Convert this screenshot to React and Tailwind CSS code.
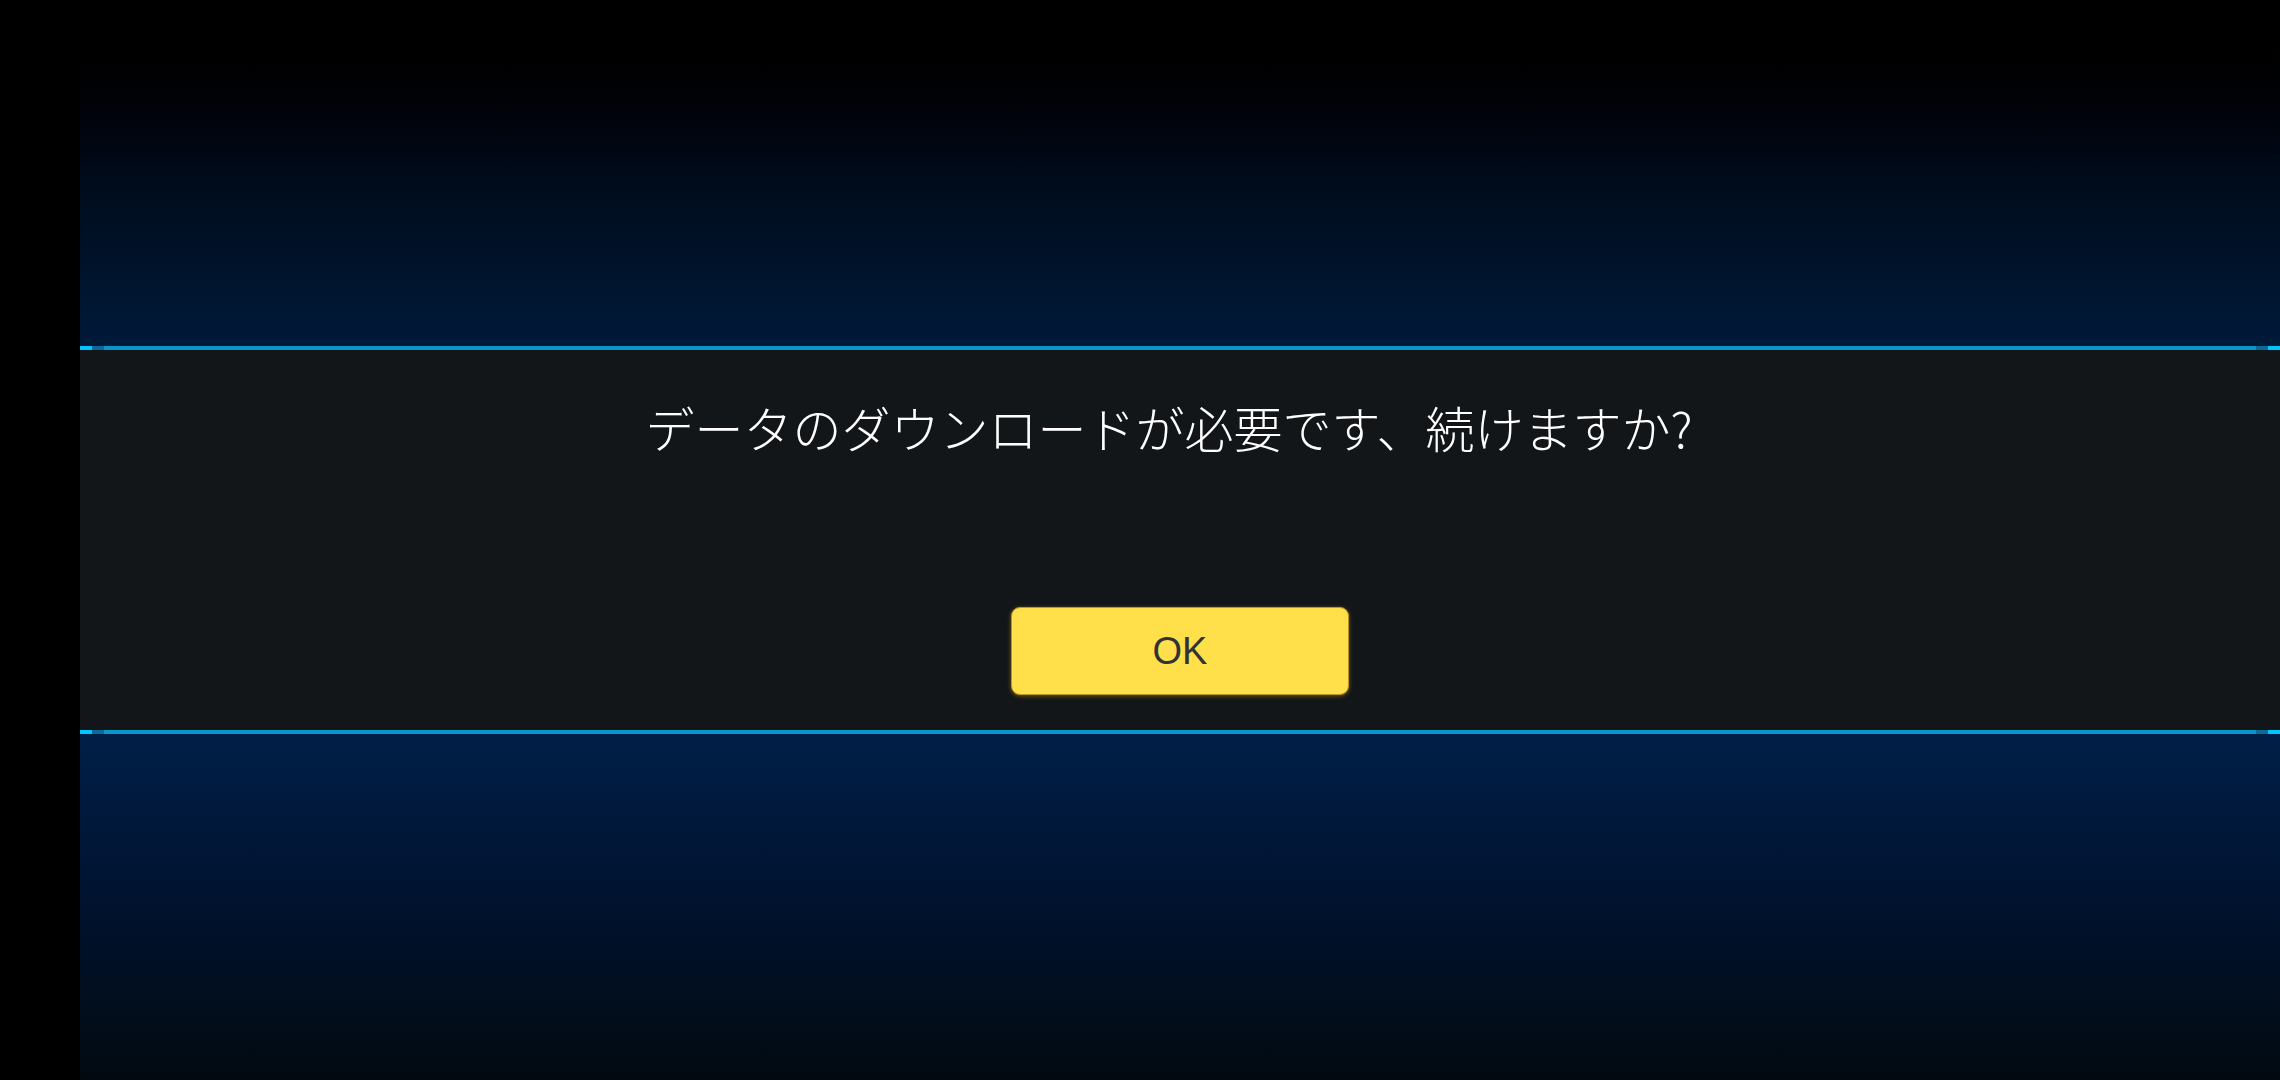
import React from 'react';

const Rule = () => (
  <div className="flex h-[4px] w-full">
    <div className="w-[12px] bg-[#00c6ff]" />
    <div className="w-[12px] bg-[#0c6a96]" />
    <div className="flex-1 bg-[#0a96ca]" />
    <div className="w-[12px] bg-[#0c6a96]" />
    <div className="w-[12px] bg-[#00c6ff]" />
  </div>
);

export default function App() {
  return (
    <div className="flex w-[2280px] h-[1080px] bg-black overflow-hidden">
      <div className="w-[80px] bg-black" />
      <div className="flex-1 flex flex-col">
        <div className="h-[346px] bg-gradient-to-b from-[#000000] via-[#000b1a] to-[#001a3a]" />
        <Rule />
        <div className="h-[380px] bg-[#131619] flex flex-col items-center">
          <p
            className="mt-[45px] mr-[22px] text-[49px] leading-[64px] text-white font-light"
            style={{ fontFamily: '"Noto Sans CJK JP", "Noto Sans", sans-serif' }}
          >
            データのダウンロードが必要です、続けますか?
          </p>
          <button
            className="mt-[148px] w-[338px] h-[88px] rounded-[9px] bg-[#ffe04a] border border-[#b8961f] shadow-[0_1px_4px_rgba(150,120,20,0.7)] text-[38px] text-[#333333] flex items-center justify-center"
            style={{ fontFamily: '"Liberation Sans", Arial, sans-serif' }}
          >
            OK
          </button>
        </div>
        <Rule />
        <div className="flex-1 bg-gradient-to-b from-[#001f48] via-[#00122e] to-[#020a10]" />
      </div>
    </div>
  );
}
